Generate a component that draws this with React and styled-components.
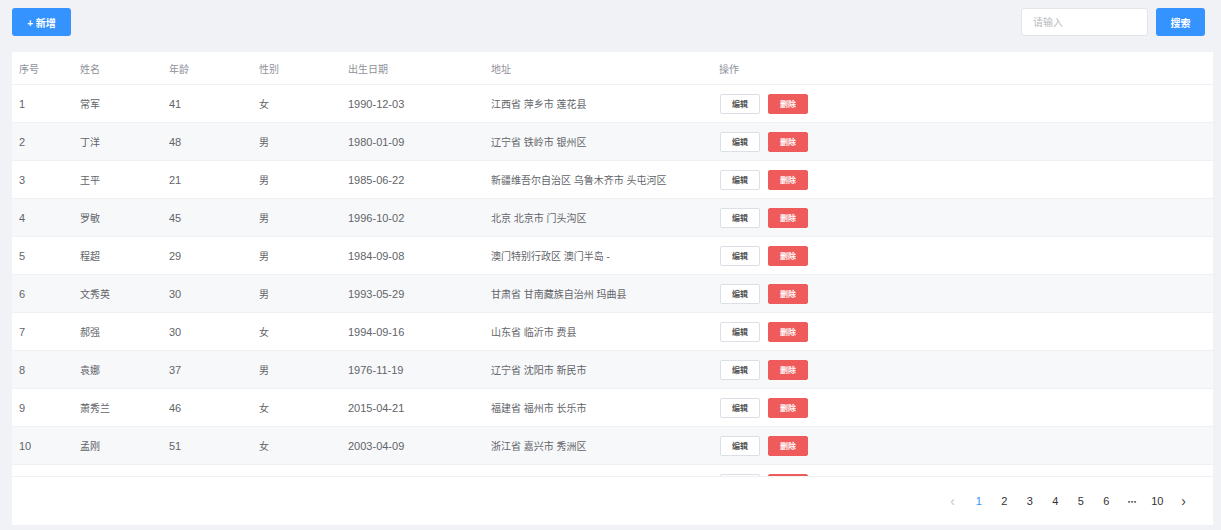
import React from "react";
import styled, { createGlobalStyle } from "styled-components";

const GlobalStyle = createGlobalStyle`
  html, body {
    margin: 0;
    padding: 0;
    background: #f1f2f5;
    font-family: "Liberation Sans", "Noto Sans CJK SC", sans-serif;
  }
`;

const rows = [
  [1, "常军", 41, "女", "1990-12-03", "江西省 萍乡市 莲花县"],
  [2, "丁洋", 48, "男", "1980-01-09", "辽宁省 铁岭市 银州区"],
  [3, "王平", 21, "男", "1985-06-22", "新疆维吾尔自治区 乌鲁木齐市 头屯河区"],
  [4, "罗敏", 45, "男", "1996-10-02", "北京 北京市 门头沟区"],
  [5, "程超", 29, "男", "1984-09-08", "澳门特别行政区 澳门半岛 -"],
  [6, "文秀英", 30, "男", "1993-05-29", "甘肃省 甘南藏族自治州 玛曲县"],
  [7, "郝强", 30, "女", "1994-09-16", "山东省 临沂市 费县"],
  [8, "袁娜", 37, "男", "1976-11-19", "辽宁省 沈阳市 新民市"],
  [9, "萧秀兰", 46, "女", "2015-04-21", "福建省 福州市 长乐市"],
  [10, "孟刚", 51, "女", "2003-04-09", "浙江省 嘉兴市 秀洲区"],
];

// which columns hold numbers (drawn a touch larger, like the reference)
const numeric = [true, false, true, false, true, false];

const cols = "61px 89px 90px 89px 143px 228px 1fr";
const pages = ["1", "2", "3", "4", "5", "6", "•••", "10"];

function ActionCell({ peek }) {
  return (
    <Cell>
      <Actions>
        <EditButton>{peek ? "" : "编辑"}</EditButton>
        <DeleteButton>{peek ? "" : "删除"}</DeleteButton>
      </Actions>
    </Cell>
  );
}

export default function App() {
  return (
    <Page>
      <GlobalStyle />
      <Toolbar>
        <PrimaryButton $width="59px">+ 新增</PrimaryButton>
        <SearchGroup>
          <SearchInput placeholder="请输入" />
          <PrimaryButton $width="49px">搜索</PrimaryButton>
        </SearchGroup>
      </Toolbar>
      <Card>
        <HeaderRow>
          <HeadCell>序号</HeadCell>
          <HeadCell>姓名</HeadCell>
          <HeadCell>年龄</HeadCell>
          <HeadCell>性别</HeadCell>
          <HeadCell>出生日期</HeadCell>
          <HeadCell>地址</HeadCell>
          <HeadCell>操作</HeadCell>
        </HeaderRow>
        <Body>
          {rows.map((r, i) => (
            <Row key={r[0]} $striped={i % 2 === 1}>
              {r.map((v, j) => (
                <Cell key={j} $num={numeric[j]}>
                  {v}
                </Cell>
              ))}
              <ActionCell />
            </Row>
          ))}
          {/* next row, only its buttons peek in above the footer */}
          <Row>
            <Cell />
            <Cell />
            <Cell />
            <Cell />
            <Cell />
            <Cell />
            <ActionCell peek />
          </Row>
        </Body>
        <Footer>
          <Pager>
            <PageArrow $disabled>‹</PageArrow>
            {pages.map((p) => (
              <PageItem key={p} $active={p === "1"} $dots={p === "•••"}>
                {p}
              </PageItem>
            ))}
            <PageArrow>›</PageArrow>
          </Pager>
        </Footer>
      </Card>
    </Page>
  );
}

const Page = styled.div`
  padding: 8px 8px 6px 12px;
  width: 1221px;
  height: 530px;
  box-sizing: border-box;
`;

const Toolbar = styled.div`
  display: flex;
  justify-content: space-between;
  align-items: center;
  height: 28px;
  padding-right: 8px;
`;

const SearchGroup = styled.div`
  display: flex;
  gap: 8px;
`;

const PrimaryButton = styled.button`
  height: 28px;
  width: ${(p) => p.$width};
  padding: 0;
  border: none;
  border-radius: 3px;
  background: #3593ff;
  color: #fff;
  font-family: inherit;
  font-size: 10px;
  font-weight: 700;
  cursor: pointer;
`;

const SearchInput = styled.input`
  width: 127px;
  height: 28px;
  box-sizing: border-box;
  border: 1px solid #e3e5ea;
  border-radius: 3px;
  padding: 0 11px;
  font-family: inherit;
  font-size: 10px;
  outline: none;

  &::placeholder {
    color: #b8bbc2;
  }
`;

const Card = styled.div`
  margin-top: 16px;
  width: 1201px;
  background: #fff;
  display: flex;
  flex-direction: column;
`;

const HeaderRow = styled.div`
  display: grid;
  grid-template-columns: ${cols};
  height: 33px;
  box-sizing: border-box;
  align-items: center;
  border-bottom: 1px solid #eef0f3;
`;

const HeadCell = styled.div`
  padding-left: 7px;
  font-size: 10px;
  color: #8e9199;
`;

const Body = styled.div`
  height: 391px;
  overflow: hidden;
`;

const Row = styled.div`
  display: grid;
  grid-template-columns: ${cols};
  height: 38px;
  align-items: center;
  box-sizing: border-box;
  border-bottom: 1px solid #eef0f3;
  background: ${(p) => (p.$striped ? "#f7f8fa" : "#fff")};
`;

const Cell = styled.div`
  padding-left: 7px;
  font-size: ${(p) => (p.$num ? "11px" : "10px")};
  color: #626469;
  white-space: nowrap;
`;

const Actions = styled.div`
  display: flex;
  gap: 8px;
  padding-left: 1px;
`;

const EditButton = styled.button`
  width: 40px;
  height: 20px;
  border: 1px solid #dcdfe5;
  border-radius: 2px;
  background: #fff;
  color: #555;
  font-family: inherit;
  font-size: 8px;
  font-weight: 700;
  padding: 0;
`;

const DeleteButton = styled(EditButton)`
  border-color: #ef5b5b;
  background: #ef5b5b;
  color: #fff;
`;

const Footer = styled.div`
  height: 48px;
  border-top: 1px solid #eef0f3;
  display: flex;
  justify-content: flex-end;
  align-items: center;
  padding-right: 16px;
`;

const Pager = styled.div`
  display: flex;
  align-items: center;
`;

const PageItem = styled.span`
  width: 25.5px;
  text-align: center;
  font-family: ${(p) => (p.$dots ? '"DejaVu Sans", sans-serif' : "inherit")};
  font-size: ${(p) => (p.$dots ? "6px" : "11px")};
  letter-spacing: ${(p) => (p.$dots ? "-0.5px" : "0")};
  color: ${(p) => (p.$active ? "#3593ff" : "#333")};
`;

const PageArrow = styled.span`
  width: 27px;
  text-align: center;
  font-size: 14px;
  line-height: 14px;
  color: ${(p) => (p.$disabled ? "#c4c7cc" : "#444")};
`;
